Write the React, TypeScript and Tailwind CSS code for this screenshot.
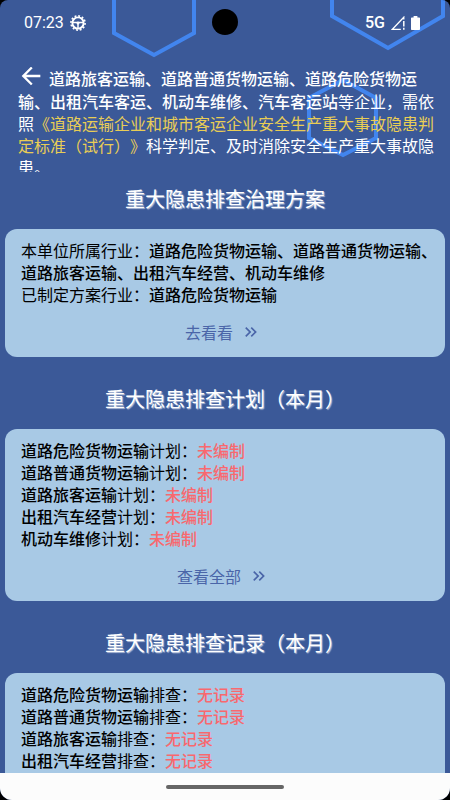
import type { ReactNode } from 'react';
import { MdArrowBack, MdKeyboardDoubleArrowRight } from 'react-icons/md';

interface IndustryStatus {
  industry: string;
  status: string;
}

const PLAN_ITEMS: IndustryStatus[] = [
  { industry: '道路危险货物运输', status: '未编制' },
  { industry: '道路普通货物运输', status: '未编制' },
  { industry: '道路旅客运输', status: '未编制' },
  { industry: '出租汽车经营', status: '未编制' },
  { industry: '机动车维修', status: '未编制' },
];

const RECORD_ITEMS: IndustryStatus[] = [
  { industry: '道路危险货物运输', status: '无记录' },
  { industry: '道路普通货物运输', status: '无记录' },
  { industry: '道路旅客运输', status: '无记录' },
  { industry: '出租汽车经营', status: '无记录' },
];

// 背景六边形装饰
function HexagonBackdrop() {
  return (
    <svg
      aria-hidden="true"
      className="pointer-events-none absolute top-0 right-0 h-[170px] w-[450px]"
      viewBox="0 0 450 170"
      fill="none"
      stroke="#4285ee"
      strokeWidth="4"
    >
      <path d="M114 -20V33L154 55L194 33V-20" />
      <path d="M332 -20V16L388 48L443 16V-20" />
      <path d="M343 80L376 98V138L343 155L309 138V98Z" />
    </svg>
  );
}

function StatusBar() {
  return (
    <div className="relative flex h-[46px] shrink-0 items-center justify-between pr-[30px] pl-6 text-white">
      <div className="flex items-center gap-[6px]">
        <span className="font-[Roboto] text-base">07:23</span>
        <svg className="size-4" viewBox="0 0 16 16" fill="none" stroke="currentColor">
          <circle cx="8" cy="8" r="5.6" strokeWidth="1.9" />
          <circle cx="8" cy="8" r="7.1" strokeWidth="1.6" strokeDasharray="1.9 1.817" />
          <path d="M3 7.6H13M8 8V13" strokeWidth="1.5" />
          <circle cx="8" cy="8" r="1.5" fill="currentColor" stroke="none" />
        </svg>
      </div>
      <span className="absolute top-[9px] left-1/2 size-[26px] -translate-x-1/2 rounded-full bg-black" />
      <div className="flex items-center gap-[6px]">
        <span className="font-[Roboto] text-base font-medium">5G</span>
        <svg className="h-[14px] w-[14px]" viewBox="0 0 14 14" fill="none" stroke="currentColor">
          <path d="M9.8 13.3H1.4L12.8 1.2V3.5" strokeWidth="1.3" />
          <path d="M12.8 5V10.4M12.8 11.8V13.8" strokeWidth="1.5" />
        </svg>
        <svg className="h-[14px] w-[9px]" viewBox="0 0 9 14" fill="currentColor">
          <path d="M2.6 0H6.4V1.5H8C8.6 1.5 9 1.9 9 2.5V13C9 13.6 8.6 14 8 14H1C.4 14 0 13.6 0 13V2.5C0 1.9 .4 1.5 1 1.5H2.6Z" />
        </svg>
      </div>
    </div>
  );
}

interface SectionProps {
  title: string;
  linkText: string;
  children: ReactNode;
}

function Section({ title, linkText, children }: SectionProps) {
  return (
    <section className="mb-7">
      <h2 className="mb-4 text-center text-xl leading-7 font-normal text-white [text-shadow:1px_1px_1px_#b4c0da]">
        {title}
      </h2>
      <div className="rounded-xl bg-[#a8c9e5] pt-[10px] pr-1 pb-[14px] pl-4 text-base leading-[22px] text-black">
        {children}
        <a
          href="#"
          className="mt-4 mr-4 flex h-[22px] items-center justify-center gap-2 text-[#4a65a8]"
        >
          {linkText}
          <MdKeyboardDoubleArrowRight className="size-5" />
        </a>
      </div>
    </section>
  );
}

function StatusList({ items, suffix }: { items: IndustryStatus[]; suffix: string }) {
  return (
    <ul>
      {items.map((item) => (
        <li key={item.industry}>
          <b className="font-medium">{item.industry}</b>
          {suffix}：<b className="font-medium text-[#f9686e]">{item.status}</b>
        </li>
      ))}
    </ul>
  );
}

export default function App() {
  return (
    <div className="h-screen bg-black font-['Noto_Sans_CJK_SC',sans-serif] [text-spacing-trim:space-all]">
      <div className="relative flex h-full flex-col overflow-hidden rounded-t-lg rounded-b-xl bg-[#3b5998]">
        <HexagonBackdrop />
        <StatusBar />

        <header className="relative mt-3 h-[127px] shrink-0 overflow-hidden pt-[9px] text-base leading-[22px] text-white">
          <p className="h-[105px] overflow-hidden pr-[14px] pl-[18px]">
            <button type="button" aria-label="返回" className="mr-1 -ml-px inline-block h-[23px] align-top">
              <MdArrowBack className="-mt-[5px] size-7" />
            </button>
            <b className="font-medium">
              道路旅客运输、道路普通货物运输、道路危险货物运输、出租汽车客运、机动车维修、汽车客运站
            </b>
            等企业，需依照
            <a href="#" className="text-[#e9cd55]">
              《道路运输企业和城市客运企业安全生产重大事故隐患判定标准（试行）》
            </a>
            科学判定、及时消除安全生产重大事故隐患。
          </p>
        </header>

        <main className="relative min-h-0 flex-1 overflow-y-auto px-[5px] [scrollbar-width:none]">
          <Section title="重大隐患排查治理方案" linkText="去看看">
            <p>
              本单位所属行业：
              <b className="font-medium">
                道路危险货物运输、道路普通货物运输、道路旅客运输、出租汽车经营、机动车维修
              </b>
            </p>
            <p>
              已制定方案行业：<b className="font-medium">道路危险货物运输</b>
            </p>
          </Section>
          <Section title="重大隐患排查计划（本月）" linkText="查看全部">
            <StatusList items={PLAN_ITEMS} suffix="计划" />
          </Section>
          <Section title="重大隐患排查记录（本月）" linkText="查看全部">
            <StatusList items={RECORD_ITEMS} suffix="排查" />
          </Section>
        </main>

        {/* 系统手势导航条 */}
        <div className="relative flex h-[27px] shrink-0 items-center justify-center bg-[#fcfcfc]">
          <span className="h-1 w-[118px] rounded-full bg-[#666666]" />
        </div>
      </div>
    </div>
  );
}
